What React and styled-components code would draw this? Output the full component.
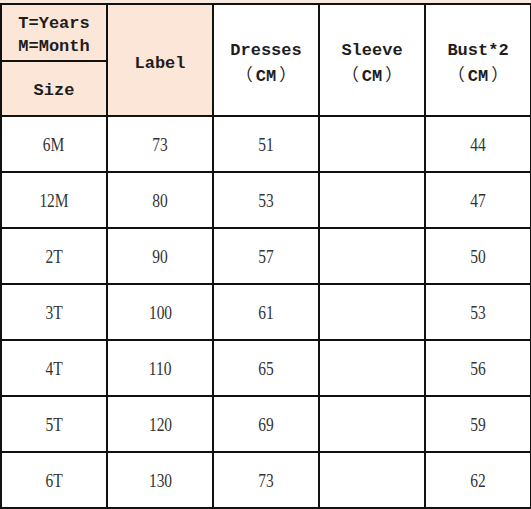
import React from 'react'
import styled, { createGlobalStyle } from 'styled-components'

const GlobalStyle = createGlobalStyle`
  html, body {
    margin: 0;
    padding: 0;
    background: #f7e9de;
  }
`

const Page = styled.div`
  padding-top: 3px;
  width: 531px;
`

const Table = styled.table`
  border-collapse: collapse;
  table-layout: fixed;
  width: 530px;
  background: #fff;
  border: 2px solid #111;
`

const HeadCell = styled.th`
  border: 2px solid #111;
  padding: ${({ lower }) => lower ? 7 : 4}px 0 0;
  height: ${({ h }) => h}px;
  background: ${({ tinted }) => tinted ? '#fce6d8' : '#fff'};
  font-family: "Liberation Mono", monospace;
  font-weight: 700;
  font-size: 17px;
  line-height: 23px;
  color: #1e1e1e;
  text-align: center;
  vertical-align: middle;
`

const Paren = styled.span`
  font-family: "Noto Sans CJK SC", sans-serif;
  font-weight: 400;
  margin: ${({ side }) => side === 'left' ? '0 3px 0 -3px' : '0 -3px 0 3px'};
`

const Cell = styled.td`
  border: 2px solid #111;
  padding: 3px 0 0;
  height: 51px;
  font-family: "Liberation Serif", serif;
  font-size: 18px;
  color: #333;
  text-align: center;
  vertical-align: middle;
`

const Value = styled.span`
  display: inline-block;
  transform: scaleX(0.86);
`

const Unit = () => (
  <>
    <Paren side="left">（</Paren>CM<Paren side="right">）</Paren>
  </>
)

const rows = [
  ['6M', 73, 51, '', 44],
  ['12M', 80, 53, '', 47],
  ['2T', 90, 57, '', 50],
  ['3T', 100, 61, '', 53],
  ['4T', 110, 65, '', 56],
  ['5T', 120, 69, '', 59],
  ['6T', 130, 73, '', 62],
]

const App = () => (
  <Page>
    <GlobalStyle />
    <Table>
      <colgroup>
        {[0, 1, 2, 3, 4].map(i => <col key={i} style={{ width: 106 }} />)}
      </colgroup>
      <thead>
        <tr>
          <HeadCell tinted h={51}>T=Years<br />M=Month</HeadCell>
          <HeadCell tinted lower rowSpan={2}>Label</HeadCell>
          <HeadCell lower rowSpan={2}>Dresses<br /><Unit /></HeadCell>
          <HeadCell lower rowSpan={2}>Sleeve<br /><Unit /></HeadCell>
          <HeadCell lower rowSpan={2}>Bust*2<br /><Unit /></HeadCell>
        </tr>
        <tr>
          <HeadCell tinted h={49}>Size</HeadCell>
        </tr>
      </thead>
      <tbody>
        {rows.map(r => (
          <tr key={r[0]}>
            {r.map((v, i) => <Cell key={i}><Value>{v}</Value></Cell>)}
          </tr>
        ))}
      </tbody>
    </Table>
  </Page>
)

export default App
